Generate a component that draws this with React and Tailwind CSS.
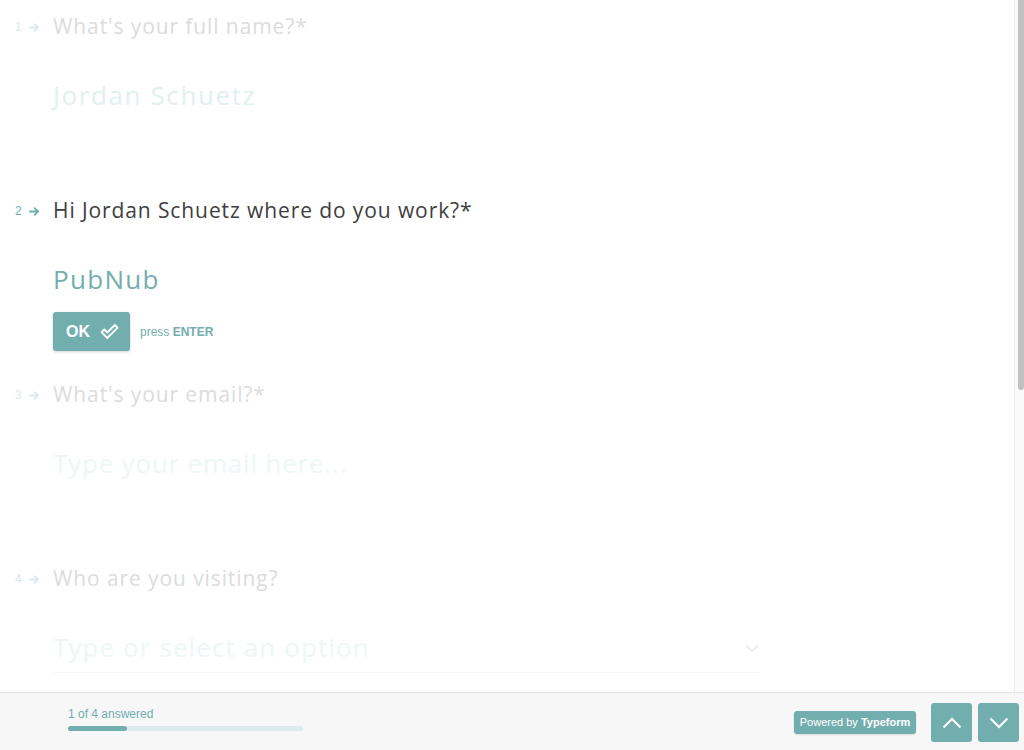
import React from "react";

const font = { fontFamily: '"Open Sans", "Noto Sans", sans-serif' };

function Arrow() {
  return (
    <svg width="11" height="9" viewBox="0 0 11 9">
      <path d="M0.9 4.5 H9 M5.6 1.1 L9.1 4.5 L5.6 7.9" fill="none" stroke="currentColor" strokeWidth="1.8" strokeLinecap="round" strokeLinejoin="round" />
    </svg>
  );
}

function Check() {
  return (
    <svg width="19" height="17" viewBox="0 0 19 17">
      <path d="M1.5 9.2 L4.3 6.5 L7.3 9.5 L14.8 1.8 L17.6 4.6 L7.3 15 Z" fill="none" stroke="white" strokeWidth="1.8" strokeLinejoin="round" />
    </svg>
  );
}

function OkRow({ visible }) {
  return (
    <div className={`ml-[53px] flex items-center h-[39px] mt-[13px] ${visible ? "" : "invisible"}`}>
      <button className="flex items-center justify-center gap-[10px] w-[77px] h-[39px] rounded-[3px] bg-[#73aeaf] shadow-[0_1px_3px_rgba(0,0,0,0.18)] pl-[2px]">
        <span className="text-white font-bold text-[16px] font-['Liberation_Sans',Arial,sans-serif]">OK</span>
        <Check />
      </button>
      <span className="ml-[10px] text-[12px] text-[#73aeaf] font-['Liberation_Sans',Arial,sans-serif]">
        press <b>ENTER</b>
      </span>
    </div>
  );
}

function Question({ n, text, active, children, okVisible }) {
  return (
    <div className="h-[184px] flex flex-col">
      <div className="flex items-center h-[30px]">
        <div className={`w-[53px] shrink-0 pl-[15px] flex items-center gap-[7px] ${active ? "text-[#73aeaf]" : "text-[#d9eaea]"}`}>
          <span className="text-[12px] font-['Liberation_Sans',Arial,sans-serif] leading-none">{n}</span>
          <Arrow />
        </div>
        <div className={`text-[21px] tracking-[0.9px] ${active ? "text-[#3e3e3e]" : "text-[#dcdcdc]"}`} style={font}>
          {text}
        </div>
      </div>
      <div className="ml-[53px] mt-[33px]">{children}</div>
      <OkRow visible={okVisible} />
    </div>
  );
}

export default function App() {
  return (
    <div className="w-[1024px] h-[750px] flex flex-col bg-white overflow-hidden">
      <div className="flex-1 flex min-h-0">
        <div className="flex-1 pt-[12px]">
          <Question n="1" text="What's your full name?*">
            <div className="h-[40px] flex items-center text-[26px] tracking-[1.6px] text-[#e3f0f0]" style={font}>Jordan Schuetz</div>
          </Question>
          <Question n="2" text="Hi Jordan Schuetz where do you work?*" active okVisible>
            <div className="h-[40px] flex items-center text-[26px] tracking-[1.3px] text-[#73aeaf]" style={font}>PubNub</div>
          </Question>
          <Question n="3" text="What's your email?*">
            <div className="h-[40px] flex items-center text-[26px] tracking-[0.8px] text-[#eef6f6]" style={font}>Type your email here...</div>
          </Question>
          <Question n="4" text="Who are you visiting?">
            <div className="w-[707px] h-[46px] border-b border-[#f3f8f8] flex items-start justify-between">
              <div className="h-[40px] flex items-center text-[26px] tracking-[1.1px] text-[#eef6f6]" style={font}>Type or select an option</div>
              <svg width="14" height="9" viewBox="0 0 14 9" className="mt-[17px] mr-[1px]">
                <path d="M1 1.5 L7 7 L13 1.5" fill="none" stroke="#dcebeb" strokeWidth="1.6" />
              </svg>
            </div>
          </Question>
        </div>
        <div className="w-[10px] border-l border-[#ececec] bg-[#fafafa] flex justify-center pl-[2px]">
          <div className="w-[6px] h-[390px] rounded-b-[3px] bg-[#c1c1c1]" />
        </div>
      </div>
      <div className="h-[58px] border-t border-[#e3e3e3] bg-[#f7f7f7] flex items-start font-['Liberation_Sans',Arial,sans-serif]">
        <div className="pl-[68px] pt-[14px] flex flex-col">
          <span className="text-[12px] leading-[14px] text-[#73aeaf]">1 of 4 answered</span>
          <div className="mt-[5px] w-[235px] h-[5px] rounded-full bg-[#dcebeb]">
            <div className="w-[59px] h-[5px] rounded-full bg-[#73aeaf]" />
          </div>
        </div>
        <div className="flex-1" />
        <div className="mt-[18px] h-[23px] w-[122px] rounded-[3px] bg-[#73aeaf] flex items-center justify-center text-white text-[11px] shadow-[0_1px_2px_rgba(0,0,0,0.12)]">
          Powered by&nbsp;<b>Typeform</b>
        </div>
        <div className="ml-[15px] mt-[10px] flex gap-[6px] mr-[5px]">
          <button className="w-[41px] h-[39px] rounded-[3px] bg-[#73aeaf] flex items-center justify-center">
            <svg width="20" height="12" viewBox="0 0 20 12"><path d="M1.5 10.5 L10 2 L18.5 10.5" fill="none" stroke="white" strokeWidth="2" /></svg>
          </button>
          <button className="w-[41px] h-[39px] rounded-[3px] bg-[#73aeaf] flex items-center justify-center">
            <svg width="20" height="12" viewBox="0 0 20 12"><path d="M1.5 1.5 L10 10 L18.5 1.5" fill="none" stroke="white" strokeWidth="2" /></svg>
          </button>
        </div>
      </div>
    </div>
  );
}
